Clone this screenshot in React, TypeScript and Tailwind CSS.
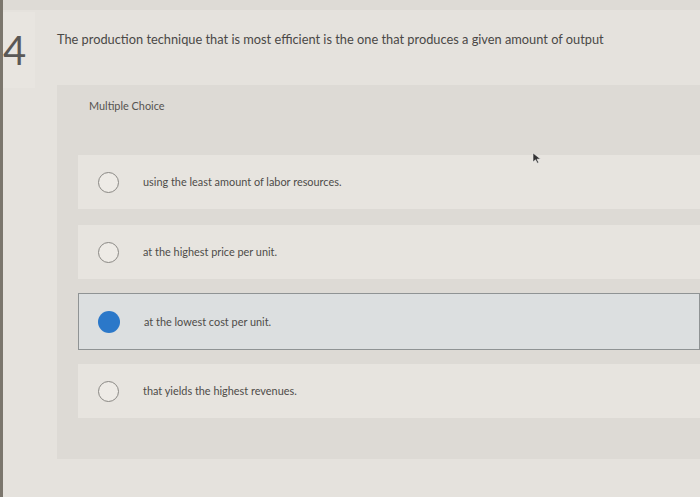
const OPTIONS = [
  'using the least amount of labor resources.',
  'at the highest price per unit.',
  'at the lowest cost per unit.',
  'that yields the highest revenues.',
];

const SELECTED = 2;

function Radio({ checked }: { checked: boolean }) {
  if (checked) return <span className="block w-[22px] h-[22px] rounded-full bg-[#2b78c9] shrink-0" />;
  return <span className="block w-[21px] h-[21px] rounded-full border border-[#8a8884] bg-[#eeebe6] shrink-0" />;
}

export default function App() {
  return (
    <div
      className="w-[700px] h-[497px] overflow-hidden bg-[#e5e2dd] border-l-[3px] border-[#7b766d] text-[#4a4846]"
      style={{ fontFamily: 'Lato, "Open Sans", sans-serif' }}
    >
      <div className="h-[10px] bg-[#dedbd6]" />
      <div className="flex">
        <div className="w-[32px] h-[76px] mt-[2px] bg-[#e8e5e0] pt-[18px]">
          <span className="block text-[40px] leading-[40px] text-[#5a5856]">4</span>
        </div>
        <div className="flex-1 pl-[22px] pt-[21px]">
          <p className="text-[12.8px] leading-[16px]">
            The production technique that is most efficient is the one that produces a given amount of output
          </p>
        </div>
      </div>

      <div className="ml-[54px] mt-[-3px] h-[374px] bg-[#dddad5] pt-[14px]">
        <p className="pl-[32px] text-[10.9px] leading-[14px] text-[#555350]">Multiple Choice</p>
        <div className="mt-[42px] flex flex-col gap-[16px] ml-[21px]">
          {OPTIONS.map((opt, i) => {
            const on = i === SELECTED;
            return (
              <div
                key={opt}
                className={
                  on
                    ? 'flex items-center h-[57px] bg-[#dcdfe0] border border-[#8f9394] pl-[19px] -my-[2px]'
                    : 'flex items-center h-[54px] bg-[#e7e4df] pl-[20px]'
                }
              >
                <Radio checked={on} />
                <span className="ml-[24px] text-[10.9px] leading-[14px] text-[#4e4c49]">{opt}</span>
              </div>
            );
          })}
        </div>
      </div>

      {/* mouse pointer */}
      <svg className="absolute left-[532px] top-[152px]" width="10" height="12" viewBox="0 0 10 12">
        <path d="M1 1 L1 10 L3.5 7.8 L5.3 11.2 L6.7 10.5 L5 7.2 L8.5 7 Z" fill="#333" stroke="#eee" strokeWidth="0.6" />
      </svg>
    </div>
  );
}
